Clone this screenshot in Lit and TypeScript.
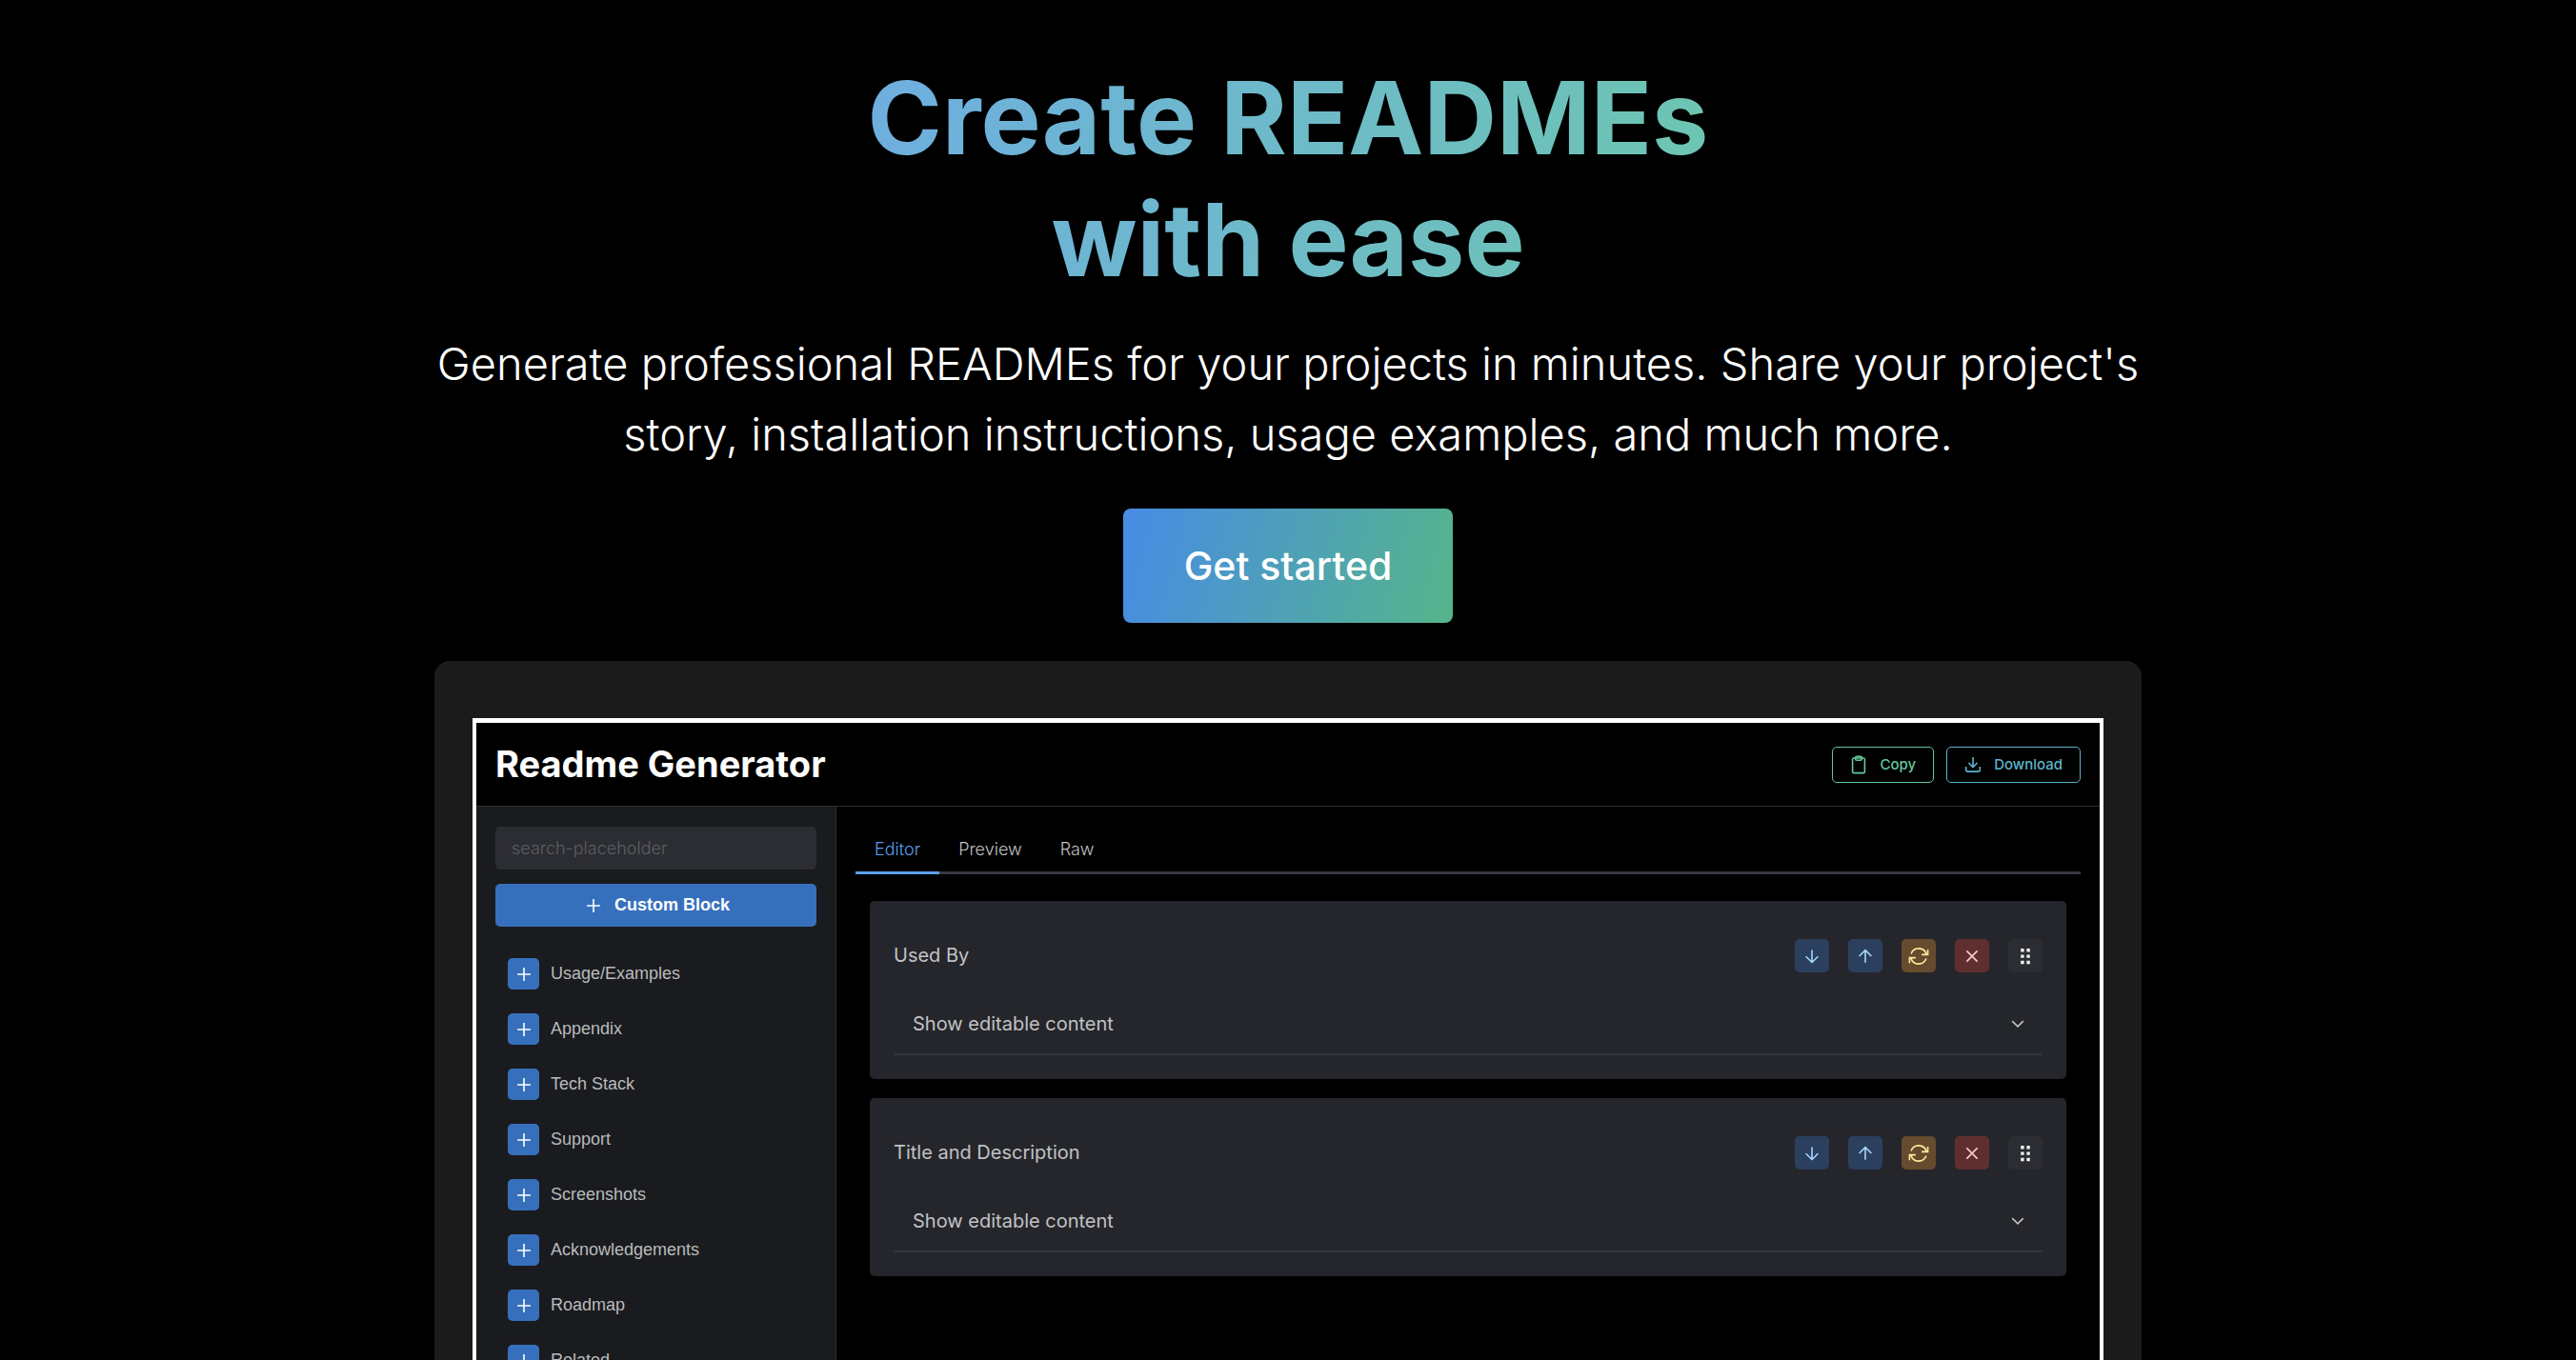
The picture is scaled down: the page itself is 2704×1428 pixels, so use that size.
import { LitElement, html, css, svg } from "lit";
import { customElement, property } from "lit/decorators.js";

const icons = {
  plus: svg`<path d="M12 5.1v13.8M5.1 12h13.8" />`,
  clipboard: svg`<rect x="5.6" y="5" width="12.8" height="15.6" rx="1.4" /><rect x="8.6" y="3.4" width="6.8" height="3.8" rx="1.4" />`,
  download: svg`<path d="M12 4v10.2M7.4 10l4.6 4.6 4.6-4.6M4.7 14v3.6c0 .9.6 1.5 1.5 1.5h11.6c.9 0 1.5-.6 1.5-1.5V14" />`,
  down: svg`<path d="M12 5.5v12.8M5.6 12.2l6.4 6.3 6.4-6.3" />`,
  up: svg`<path d="M12 18.7V5.9M5.6 12L12 5.7l6.4 6.3" />`,
  refresh: svg`<path d="M4.1 9.4a8.4 8.4 0 0 1 16 .6M21.6 5v5.4h-6.5M19.9 14.6a8.4 8.4 0 0 1-16-.6M2.4 19.2v-5.6h6.5" />`,
  cross: svg`<path d="M6.4 6.4l11.2 11.2M17.6 6.4L6.4 17.6" />`,
  chevron: svg`<path d="M6.2 9.2l5.8 5.6 5.8-5.6" />`,
  dots: svg`<path class="solid" d="M7.2 4h3.4v3.4H7.2zM13.4 4h3.4v3.4h-3.4zM7.2 10.4h3.4v3.4H7.2zM13.4 10.4h3.4v3.4h-3.4zM7.2 16.8h3.4v3.4H7.2zM13.4 16.8h3.4v3.4h-3.4z" />`,
};

type IconName = keyof typeof icons;

@customElement("ui-icon")
class UiIcon extends LitElement {
  @property() name: IconName = "plus";

  static styles = css`
    :host {
      display: inline-flex;
      flex: none;
    }
    .glyph {
      width: 24px;
      height: 24px;
      fill: none;
      stroke: currentColor;
      stroke-width: 1.6;
    }
    .solid {
      fill: currentColor;
      stroke: none;
    }
  `;

  render() {
    return html`<svg class="glyph" viewBox="0 0 24 24" aria-hidden="true">${icons[this.name]}</svg>`;
  }
}

@customElement("block-card")
class BlockCard extends LitElement {
  @property() heading = "";

  static styles = css`
    :host {
      display: block;
      padding: 40px 25px 25px 25px;
      border-radius: 5px;
      background: #25262b;
      color: #c1c2c5;
    }
    .head {
      display: flex;
      align-items: center;
      justify-content: space-between;
    }
    .title {
      margin: 0;
      font-size: 20px;
      line-height: 35px;
      font-weight: 400;
    }
    .tools {
      display: flex;
      gap: 20px;
    }
    button {
      font: inherit;
      border: 0;
      cursor: pointer;
    }
    .tool {
      display: flex;
      align-items: center;
      justify-content: center;
      width: 36px;
      height: 35px;
      padding: 0;
      border-radius: 5px;
    }
    .blue {
      background: #2b3f5e;
      color: #a5d8ff;
    }
    .yellow {
      background: #664b2e;
      color: #ffec99;
    }
    .red {
      background: #5f2f30;
      color: #ffc9c9;
    }
    .gray {
      background: #2c2d32;
      color: #f1f3f5;
    }
    .toggle {
      display: flex;
      align-items: center;
      justify-content: space-between;
      width: 100%;
      margin-top: 22px;
      padding: 16px 14px 15px 20px;
      border-bottom: 2px solid #34353a;
      background: none;
      color: inherit;
      font-size: 20px;
      line-height: 32px;
      text-align: left;
    }
  `;

  render() {
    return html`
      <div class="head">
        <h3 class="title">${this.heading}</h3>
        <div class="tools">
          <button class="tool blue" aria-label="Move down"><ui-icon name="down"></ui-icon></button>
          <button class="tool blue" aria-label="Move up"><ui-icon name="up"></ui-icon></button>
          <button class="tool yellow" aria-label="Reset"><ui-icon name="refresh"></ui-icon></button>
          <button class="tool red" aria-label="Remove"><ui-icon name="cross"></ui-icon></button>
          <button class="tool gray" aria-label="Drag"><ui-icon name="dots"></ui-icon></button>
        </div>
      </div>
      <button class="toggle" aria-expanded="false">
        Show editable content<ui-icon name="chevron"></ui-icon>
      </button>
    `;
  }
}

@customElement("app-root")
class AppRoot extends LitElement {
  private blocks = [
    "Usage/Examples",
    "Appendix",
    "Tech Stack",
    "Support",
    "Screenshots",
    "Acknowledgements",
    "Roadmap",
    "Related",
  ];
  private tabs = ["Editor", "Preview", "Raw"];
  private cards = ["Used By", "Title and Description"];

  static styles = css`
    :host {
      display: flex;
      justify-content: center;
      box-sizing: border-box;
      height: 100vh;
      overflow: hidden;
      background: #000;
      color: #fff;
      font-family: Inter, "Liberation Sans", sans-serif;
    }
    * {
      box-sizing: border-box;
    }
    button,
    input {
      font: inherit;
      border: 0;
    }
    button {
      cursor: pointer;
    }
    .page {
      display: flex;
      flex-direction: column;
      align-items: center;
      width: 100%;
      max-width: 1792px;
      padding-top: 60px;
    }
    .headline {
      margin: 0;
      background: linear-gradient(105deg, #6eaee0, #6dc6b0);
      background-clip: text;
      -webkit-background-clip: text;
      color: transparent;
      font-size: 106px;
      line-height: 128px;
      font-weight: 700;
      text-align: center;
    }
    .lead {
      margin: 29px 0 0;
      font-size: 47px;
      line-height: 74px;
      font-weight: 300;
      text-align: center;
    }
    .start {
      flex: none;
      height: 120px;
      margin-top: 41px;
      padding: 0 64px;
      border-radius: 8px;
      background: linear-gradient(105deg, #478be6, #56b58a);
      color: #fff;
      font-size: 41px;
      font-weight: 500;
      text-decoration: none;
      line-height: 120px;
    }
    .stage {
      display: flex;
      flex: 1 0 auto;
      width: 100%;
      margin-top: 40px;
      padding: 60px 40px 0;
      border-radius: 16px 16px 0 0;
      background: #1b1b1b;
    }
    .window {
      display: flex;
      flex-direction: column;
      flex: 1;
      border: 4px solid #fff;
      border-top-width: 5px;
      border-bottom: 0;
      background: #000;
    }
    .bar {
      display: flex;
      align-items: center;
      justify-content: space-between;
      padding: 21px 20px;
      border-bottom: 1px solid #2c2e33;
    }
    .brand {
      margin: 0;
      font-size: 38px;
      line-height: 45px;
      font-weight: 700;
    }
    .actions {
      display: flex;
      gap: 13px;
    }
    .action {
      display: flex;
      align-items: center;
      gap: 10px;
      height: 38px;
      padding: 0 18px 0 15px;
      border: 1px solid currentColor;
      border-radius: 5px;
      background: none;
      font-size: 15px;
      font-weight: 500;
    }
    .copy {
      color: #63c99b;
    }
    .download {
      color: #5bb4cb;
    }
    .body {
      display: grid;
      grid-template-columns: 378px 1fr;
      flex: 1;
    }
    .side {
      padding: 21px 20px 0;
      border-right: 1px solid #2c2e33;
      background: #1a1b1e;
    }
    .search {
      display: block;
      width: 100%;
      height: 45px;
      padding: 0 17px;
      border-radius: 5px;
      background: #2c2d32;
      color: #c1c2c5;
      font-size: 18px;
      font-weight: 300;
    }
    .search::placeholder {
      color: #5c5f66;
    }
    .custom {
      display: flex;
      align-items: center;
      justify-content: center;
      gap: 10px;
      width: 100%;
      height: 45px;
      margin-top: 15px;
      padding: 0;
      border-radius: 5px;
      background: #3670bd;
      color: #fff;
      font-family: "Liberation Sans", Arial, sans-serif;
      font-size: 18px;
      font-weight: 700;
    }
    .list {
      display: grid;
      gap: 25px;
      margin: 33px 0 0;
      padding: 0 0 0 13px;
      list-style: none;
    }
    .item {
      display: flex;
      align-items: center;
      gap: 12px;
      color: #b9babd;
      font-family: "Liberation Sans", Arial, sans-serif;
      font-size: 18px;
      line-height: 33px;
    }
    .add {
      display: flex;
      align-items: center;
      justify-content: center;
      width: 33px;
      height: 33px;
      padding: 0;
      border-radius: 5px;
      background: #3670bd;
      color: #fff;
    }
    .main {
      padding: 21px 20px 0;
    }
    .tabs {
      display: flex;
      border-bottom: 3px solid #373a40;
    }
    .tab {
      margin-bottom: -3px;
      padding: 0 20px;
      border-bottom: 3px solid transparent;
      background: none;
      color: #c1c2c5;
      font-size: 18px;
      font-weight: 300;
      line-height: 47px;
    }
    .current {
      border-bottom-color: #5c9fee;
      color: #5c9fee;
    }
    .cards {
      display: grid;
      gap: 20px;
      padding: 28px 15px 0;
    }
  `;

  render() {
    return html`
      <main class="page">
        <h1 class="headline">Create READMEs<br />with ease</h1>
        <p class="lead">
          Generate professional READMEs for your projects in minutes. Share your project's story,
          installation instructions, usage examples, and much more.
        </p>
        <a class="start" href="#editor">Get started</a>
        <section class="stage" id="editor">
          <div class="window">
            <header class="bar">
              <h2 class="brand">Readme Generator</h2>
              <div class="actions">
                <button class="action copy"><ui-icon name="clipboard"></ui-icon>Copy</button>
                <button class="action download"><ui-icon name="download"></ui-icon>Download</button>
              </div>
            </header>
            <div class="body">
              <aside class="side">
                <input class="search" type="search" aria-label="Search blocks" placeholder="search-placeholder" />
                <button class="custom"><ui-icon name="plus"></ui-icon>Custom Block</button>
                <ul class="list">
                  ${this.blocks.map(
                    (name) => html`<li class="item">
                      <button class="add" aria-label="Add ${name}"><ui-icon name="plus"></ui-icon></button>${name}
                    </li>`,
                  )}
                </ul>
              </aside>
              <div class="main">
                <div class="tabs" role="tablist">
                  ${this.tabs.map(
                    (name, i) => html`<button
                      class="tab ${i === 0 ? "current" : ""}"
                      role="tab"
                      aria-selected=${i === 0 ? "true" : "false"}
                    >
                      ${name}
                    </button>`,
                  )}
                </div>
                <div class="cards">
                  ${this.cards.map((name) => html`<block-card heading=${name}></block-card>`)}
                </div>
              </div>
            </div>
          </div>
        </section>
      </main>
    `;
  }
}
